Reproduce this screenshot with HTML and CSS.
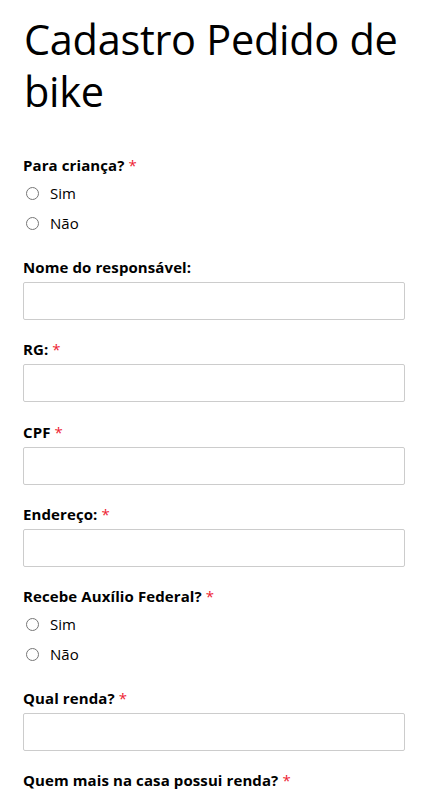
FILE: index.html
```html
<!DOCTYPE html>
<html lang="pt-BR">
<head>
<meta charset="utf-8">
<title>Cadastro Pedido de bike</title>
<link rel="stylesheet" href="styles.css">
</head>
<body>
<main class="page">
  <h1 class="title">Cadastro Pedido de bike</h1>
  <form class="form">
    <fieldset class="field">
      <legend class="label">Para criança? <span class="req">*</span></legend>
      <label class="radio"><input type="radio" name="crianca"><span>Sim</span></label>
      <label class="radio"><input type="radio" name="crianca"><span>Não</span></label>
    </fieldset>
    <div class="field">
      <label class="label" for="nome">Nome do responsável:</label>
      <input class="input" id="nome" type="text">
    </div>
    <div class="field">
      <label class="label" for="rg">RG: <span class="req">*</span></label>
      <input class="input" id="rg" type="text">
    </div>
    <div class="field">
      <label class="label" for="cpf">CPF <span class="req">*</span></label>
      <input class="input" id="cpf" type="text">
    </div>
    <div class="field">
      <label class="label" for="end">Endereço: <span class="req">*</span></label>
      <input class="input" id="end" type="text">
    </div>
    <fieldset class="field">
      <legend class="label">Recebe Auxílio Federal? <span class="req">*</span></legend>
      <label class="radio"><input type="radio" name="aux"><span>Sim</span></label>
      <label class="radio"><input type="radio" name="aux"><span>Não</span></label>
    </fieldset>
    <div class="field">
      <label class="label" for="renda">Qual renda? <span class="req">*</span></label>
      <input class="input" id="renda" type="text">
    </div>
    <div class="field">
      <label class="label" for="outros">Quem mais na casa possui renda? <span class="req">*</span></label>
      <input class="input" id="outros" type="text">
    </div>
  </form>
</main>
</body>
</html>
```

FILE: styles.css
```css
html, body {
  margin: 0;
  padding: 0;
  background: #fff;
}
body {
  font-family: "Open Sans", "Noto Sans", sans-serif;
  color: #000;
}
.page {
  padding: 13px 22px 0 23px;
}
.title {
  margin: 0 0 0 1px;
  font-size: 41.5px;
  font-weight: 400;
  line-height: 52px;
  letter-spacing: -0.3px;
}
.form {
  display: flex;
  flex-direction: column;
  margin-top: 38px;
}
.field {
  border: 0;
  margin: 0 0 19.3px 0;
  padding: 0;
  min-width: 0;
  display: flex;
  flex-direction: column;
}
fieldset.field {
  margin-bottom: 19px;
}
.label {
  padding: 0;
  font-size: 15px;
  font-weight: 700;
  line-height: 20px;
  margin-bottom: 5px;
  letter-spacing: 0.1px;
}
fieldset.field .label {
  margin-bottom: 3px;
}
.req {
  color: #ee2233;
  font-weight: 400;
}
.radio {
  display: flex;
  align-items: center;
  height: 30px;
  font-size: 15px;
}
.radio input {
  margin: 0 11px 0 3px;
  width: 13px;
  height: 13px;
}
.input {
  box-sizing: border-box;
  width: 100%;
  height: 38px;
  border: 1px solid #cccccc;
  border-radius: 2px;
  margin: 0;
  font: inherit;
}
```
